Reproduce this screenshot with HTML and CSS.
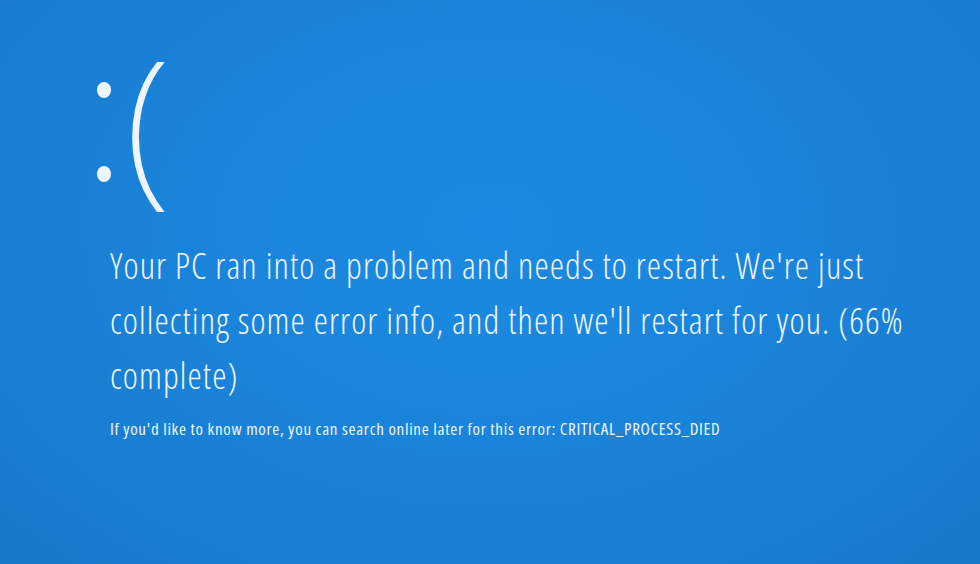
FILE: index.html
```html
<!DOCTYPE html>
<html lang="en">
<head>
  <meta charset="UTF-8" />
  <meta name="viewport" content="width=device-width, initial-scale=1" />
  <title>Your PC ran into a problem</title>
  <link rel="stylesheet" href="styles.css">
</head>
<body>
  <main class="bsod">
    <div class="face" role="img" aria-label=":(">
      <div class="eyes">
        <span class="eye"></span>
        <span class="eye"></span>
      </div>
      <span class="mouth">(</span>
    </div>

    <p class="message">Your PC ran into a problem and needs to restart. We're just collecting some error info, and then we'll restart for you. (66% complete)</p>

    <p class="details">If you'd like to know more, you can search online later for this error: CRITICAL_PROCESS_DIED</p>
  </main>
</body>
</html>
```

FILE: styles.css
```css
* {
  box-sizing: border-box;
}
html,
body {
  height: 100%;
}
body {
  margin: 0;
  background: radial-gradient(ellipse at 50% 40%, #1c8ae2 0%, #1a84da 45%, #1878c9 100%);
  color: #eef5fc;
  font-family: 'Open Sans', 'Noto Sans', sans-serif;
  overflow: hidden;
}
.bsod {
  padding: 62px 0 0 110px;
  display: flex;
  flex-direction: column;
}
.face {
  display: flex;
  align-items: flex-start;
  height: 151px;
  margin-left: -13px;
}
.eyes {
  display: flex;
  flex-direction: column;
  gap: 68px;
  margin-top: 20px;
}
.eye {
  width: 14px;
  height: 16px;
  border-radius: 50%;
  background: #eef5fc;
}
.mouth {
  font-family: 'Noto Sans', 'Open Sans', sans-serif;
  font-size: 172px;
  font-weight: 200;
  line-height: 1;
  margin: -30px 0 0 14px;
}
.message {
  margin: 25px 0 0;
  max-width: 810px;
  font-size: 36px;
  line-height: 55px;
  font-weight: 300;
  font-stretch: 84%;
  letter-spacing: 1.1px;
}
.details {
  margin: 14px 0 0;
  font-size: 17px;
  font-stretch: 85%;
  letter-spacing: 0.7px;
}
```
